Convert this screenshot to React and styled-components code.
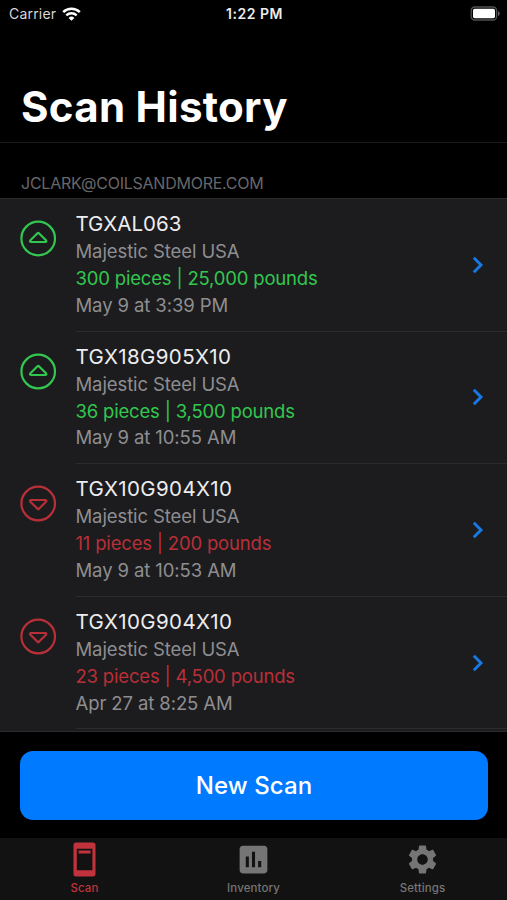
import { MdAssessment, MdSettings } from "react-icons/md";
import styled, { createGlobalStyle } from "styled-components";

const scans = [
  {
    id: 1,
    code: "TGXAL063",
    supplier: "Majestic Steel USA",
    amount: "300 pieces | 25,000 pounds",
    date: "May 9 at 3:39 PM",
    direction: "up",
  },
  {
    id: 2,
    code: "TGX18G905X10",
    supplier: "Majestic Steel USA",
    amount: "36 pieces | 3,500 pounds",
    date: "May 9 at 10:55 AM",
    direction: "up",
  },
  {
    id: 3,
    code: "TGX10G904X10",
    supplier: "Majestic Steel USA",
    amount: "11 pieces | 200 pounds",
    date: "May 9 at 10:53 AM",
    direction: "down",
  },
  {
    id: 4,
    code: "TGX10G904X10",
    supplier: "Majestic Steel USA",
    amount: "23 pieces | 4,500 pounds",
    date: "Apr 27 at 8:25 AM",
    direction: "down",
  },
];

const GlobalStyle = createGlobalStyle`
  * {
    box-sizing: border-box;
  }
  body {
    margin: 0;
    background: #000;
    font-family: Inter, "Liberation Sans", sans-serif;
  }
`;

const Container = styled.div`
  width: 100%;
  height: 100vh;
  display: flex;
  flex-direction: column;
  overflow: hidden;
  background-color: #000;
  color: #fff;
`;

const StatusBar = styled.div`
  height: 27px;
  flex-shrink: 0;
  padding: 0 7px 0 9px;
  display: grid;
  grid-template-columns: 1fr auto 1fr;
  align-items: center;
`;
const Carrier = styled.div`
  display: flex;
  align-items: center;
  gap: 6px;
  font-size: 14px;
  letter-spacing: 0.2px;
  color: #d6d6d6;
`;
const Time = styled.div`
  font-size: 14px;
  font-weight: 600;
  letter-spacing: 0.5px;
  color: #ececec;
`;
const Battery = styled.svg`
  justify-self: end;
  margin-top: -1px;
`;

const Header = styled.header`
  height: 116px;
  flex-shrink: 0;
  padding: 52px 21px 0;
  border-bottom: 1px solid #1b1b1b;
`;
const Title = styled.h1`
  margin: 0;
  font-size: 42px;
  line-height: 56px;
  font-weight: 700;
  letter-spacing: 0.3px;
  white-space: nowrap;
`;

const Account = styled.div`
  height: 55px;
  flex-shrink: 0;
  padding: 30px 21px 0;
  font-size: 16px;
  line-height: 20px;
  letter-spacing: -0.24px;
  color: #67676a;
  text-transform: uppercase;
`;

const List = styled.div`
  height: 534px;
  flex-shrink: 0;
  overflow: hidden;
  background-color: #1c1c1e;
  border-top: 1px solid #2b2b2d;
  border-bottom: 1px solid #2b2b2d;
`;
const Row = styled.div`
  height: 132.6px;
  padding-left: 20px;
  display: flex;
`;
const Direction = styled.svg`
  flex-shrink: 0;
  margin: 21px 18.5px 0 0;
  color: ${(props) => (props.$up ? "#32c74f" : "#b92f38")};
`;
const Details = styled.div`
  flex: 1;
  display: flex;
  align-items: center;
  justify-content: space-between;
  padding-right: 23px;
  border-bottom: 1px solid #2c2c2e;
`;
const Info = styled.div`
  align-self: flex-start;
  padding-top: 11px;
  white-space: nowrap;
`;
const Code = styled.div`
  font-size: 20.5px;
  line-height: 28px;
  letter-spacing: ${(props) => (props.$long ? "0.36px" : "0")};
  color: #ededee;
`;
const Line = styled.div`
  font-size: 18.5px;
  line-height: 26.9px;
  letter-spacing: -0.1px;
  color: #8e8e91;
`;
const Amount = styled(Line)`
  letter-spacing: -0.18px;
  color: ${(props) => (props.$up ? "#32c74f" : "#b92f38")};
`;

const Footer = styled.div`
  height: 106px;
  flex-shrink: 0;
  padding: 19px 19px 0 20px;
`;
const Button = styled.button`
  width: 100%;
  height: 69px;
  border: none;
  border-radius: 13px;
  background: #007aff;
  color: #fff;
  font-family: inherit;
  font-size: 24px;
  font-weight: 500;
  letter-spacing: 0.1px;
  cursor: pointer;
`;

const TabBar = styled.nav`
  flex: 1;
  display: grid;
  grid-template-columns: repeat(3, 1fr);
  background-color: #121212;
`;
const Tab = styled.div`
  display: flex;
  flex-direction: column;
  align-items: center;
  font-size: 11.5px;
  line-height: 15px;
  font-weight: 500;
  letter-spacing: 0.1px;
  color: ${(props) => (props.$active ? "#c0323c" : "#757575")};
`;
const TabIcon = styled.div`
  height: 43px;
  display: flex;
  align-items: center;
  justify-content: center;
`;

const WifiIcon = () => (
  <svg width="19" height="14" viewBox="0 0 19 14" fill="none" stroke="#fff">
    <path d="M1.2 5.1a11.8 11.8 0 0 1 16.6 0" strokeWidth="2.5" />
    <path d="M4.3 8.4a7.4 7.4 0 0 1 10.4 0" strokeWidth="2.3" />
    <path d="M9.5 13.8 6.6 10.9a4.1 4.1 0 0 1 5.8 0z" fill="#fff" stroke="none" />
  </svg>
);

const DirectionIcon = ({ up }) => (
  <Direction $up={up} width="37" height="37" viewBox="0 0 37 37" fill="none" stroke="currentColor" strokeWidth="2.2">
    <circle cx="18.2" cy="18.5" r="16.8" />
    <path
      d={up ? "M17.5 13.2Q18.2 12.6 18.9 13.2L26 20.2Q27 22 25.2 22H11.2Q9.4 22 10.4 20.2Z" : "M17.5 23.8Q18.2 24.4 18.9 23.8L26 16.8Q27 15 25.2 15H11.2Q9.4 15 10.4 16.8Z"}
      strokeLinejoin="round"
    />
  </Direction>
);

const Chevron = () => (
  <svg width="12" height="18" viewBox="0 0 12 18" fill="none" stroke="#1779e6" strokeWidth="2.9">
    <path d="M1.8 1.8 9 9l-7.2 7.2" />
  </svg>
);

const ScanIcon = () => (
  <svg width="23" height="35" viewBox="0 0 23 35" fill="currentColor">
    <path
      fillRule="evenodd"
      d="M3 .5h17a2.5 2.5 0 0 1 2.5 2.5v29a2.5 2.5 0 0 1-2.5 2.5H3A2.5 2.5 0 0 1 .5 32V3A2.5 2.5 0 0 1 3 .5zM3.8 6.7v21.6h15.6V6.7z"
    />
    <path d="M5.6 8.5h12v3h-12z" />
  </svg>
);

const App = () => {
  return (
    <Container>
      <GlobalStyle />
      <StatusBar>
        <Carrier>
          Carrier
          <WifiIcon />
        </Carrier>
        <Time>1:22 PM</Time>
        <Battery width="30" height="15" viewBox="0 0 30 15">
          <rect x="1.2" y="1" width="25.4" height="13" rx="3.6" fill="none" stroke="#525254" strokeWidth="1.3" />
          <rect x="3" y="2.8" width="22" height="9.4" rx="1.6" fill="#fff" />
          <path d="M28 5.2c2.2.7 2.2 4 0 4.7z" fill="#69696b" />
        </Battery>
      </StatusBar>
      <Header>
        <Title>Scan History</Title>
      </Header>
      <Account>jclark@coilsandmore.com</Account>
      <List>
        {scans.map((scan) => (
          <Row key={scan.id}>
            <DirectionIcon up={scan.direction === "up"} />
            <Details>
              <Info>
                <Code $long={scan.code.length > 8}>{scan.code}</Code>
                <Line>{scan.supplier}</Line>
                <Amount $up={scan.direction === "up"}>{scan.amount}</Amount>
                <Line>{scan.date}</Line>
              </Info>
              <Chevron />
            </Details>
          </Row>
        ))}
      </List>
      <Footer>
        <Button>New Scan</Button>
      </Footer>
      <TabBar>
        <Tab $active>
          <TabIcon>
            <ScanIcon />
          </TabIcon>
          Scan
        </Tab>
        <Tab>
          <TabIcon>
            <MdAssessment size={37} />
          </TabIcon>
          Inventory
        </Tab>
        <Tab>
          <TabIcon>
            <MdSettings size={35} />
          </TabIcon>
          Settings
        </Tab>
      </TabBar>
    </Container>
  );
};

export default App;
